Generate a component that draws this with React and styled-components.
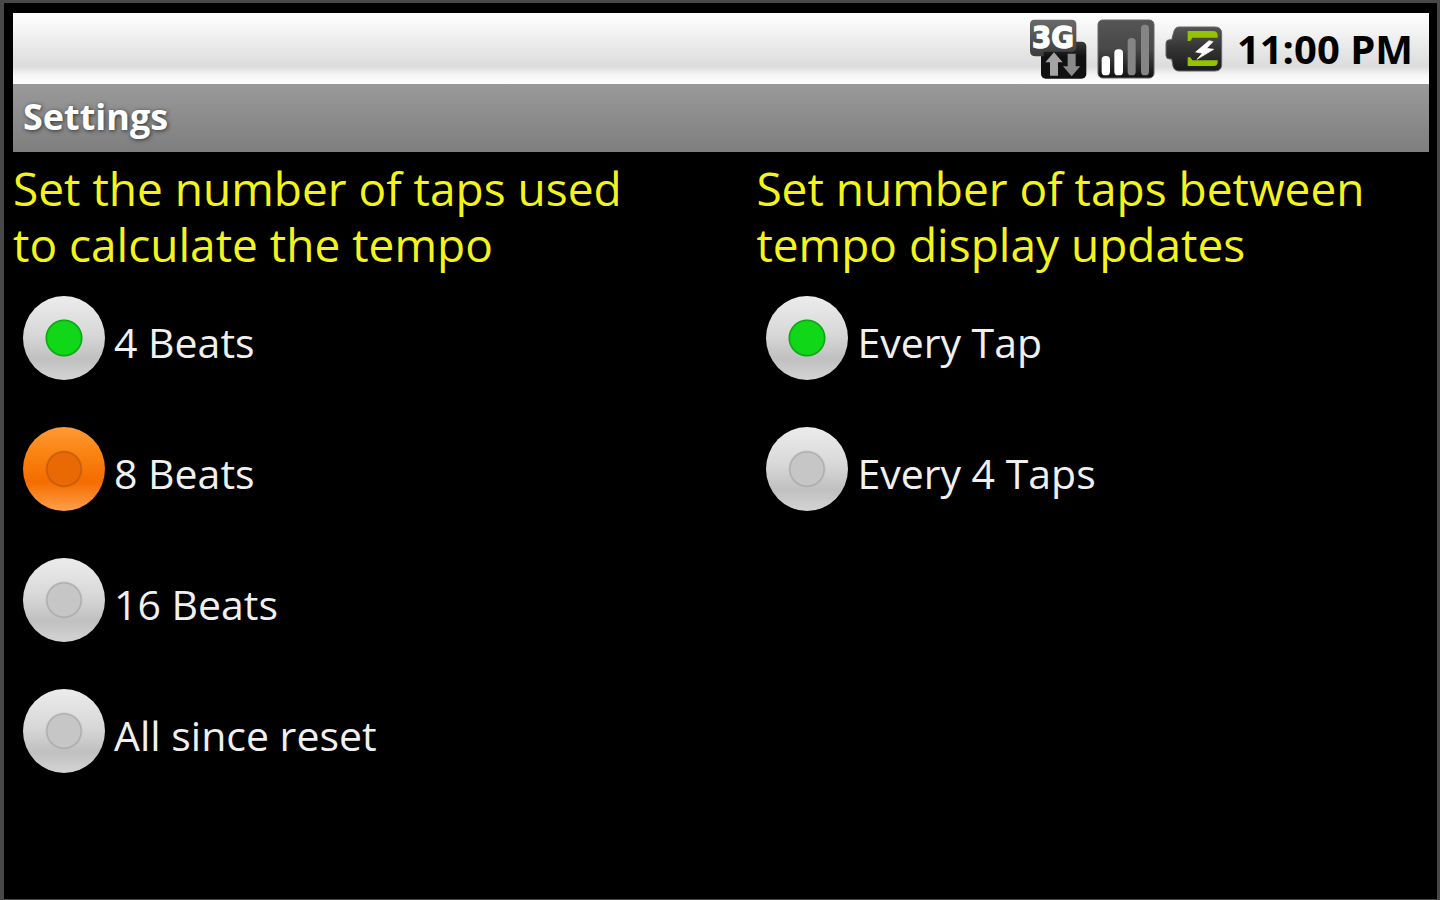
import React, { useState } from "react";
import styled, { createGlobalStyle, css } from "styled-components";

const BEAT_OPTIONS = ["4 Beats", "8 Beats", "16 Beats", "All since reset"];
const UPDATE_OPTIONS = ["Every Tap", "Every 4 Taps"];

const NetworkIcon = () => (
  <svg width="58" height="60" viewBox="54 50 174 180" aria-hidden="true">
    <defs>
      <linearGradient id="net" x1="0" y1="0" x2="0" y2="1">
        <stop offset="0" stopColor="#6a6a6a" />
        <stop offset="1" stopColor="#3c3c3c" />
      </linearGradient>
      <linearGradient id="arrows" x1="0" y1="0" x2="0" y2="1">
        <stop offset="0" stopColor="#3a3a3a" />
        <stop offset="0.4" stopColor="#111" />
        <stop offset="1" stopColor="#111" />
      </linearGradient>
    </defs>
    <rect x="90" y="118" width="136" height="111" rx="14" fill="url(#arrows)" />
    <path
      d="M70 52h112q14 0 14 14v68q0 14-14 14h-84v14H74q-17 0-17-16V66q0-14 13-14z"
      fill="url(#net)"
    />
    <text
      x="126"
      y="137"
      textAnchor="middle"
      fontFamily="DejaVu Sans Condensed, DejaVu Sans, sans-serif"
      fontSize="92"
      fontWeight="bold"
      fill="#fff"
      stroke="#fff"
      strokeWidth="4"
    >
      3G
    </text>
    <path d="M129 150l26 30h-14v40h-24v-40h-14z" fill="#a4a4a4" />
    <path d="M182 222l-26-30h14v-38h24v38h14z" fill="#8a8a8a" />
  </svg>
);

const SignalIcon = () => (
  <svg width="58" height="60" viewBox="256 51 174 180" aria-hidden="true">
    <defs>
      <linearGradient id="signal" x1="0" y1="0" x2="0" y2="1">
        <stop offset="0" stopColor="#555" />
        <stop offset="0.5" stopColor="#484848" />
        <stop offset="1" stopColor="#101010" />
      </linearGradient>
    </defs>
    <rect x="259" y="54" width="168" height="174" rx="14" fill="url(#signal)" stroke="#666" strokeWidth="3" />
    <rect x="270" y="162" width="25" height="58" rx="11" fill="#fff" />
    <rect x="308" y="142" width="26" height="78" rx="11" fill="#fff" />
    <rect x="348" y="108" width="24" height="112" rx="11" fill="#858585" />
    <rect x="388" y="68" width="24" height="152" rx="11" fill="#858585" />
  </svg>
);

const BatteryIcon = () => (
  <svg width="58" height="46" viewBox="460 74 174 138" aria-hidden="true">
    <defs>
      <linearGradient id="battery" x1="0" y1="0" x2="0" y2="1">
        <stop offset="0" stopColor="#555" />
        <stop offset="0.5" stopColor="#333" />
        <stop offset="1" stopColor="#1a1a1a" />
      </linearGradient>
    </defs>
    <path
      d="M502 77h108q20 0 20 20v92q0 20-20 20H502q-14 0-18-14l-4-22h-6q-11 0-11-11v-36q0-11 11-11h6l6-22q4-16 16-16z"
      fill="url(#battery)"
      stroke="#666"
      strokeWidth="3"
    />
    <path d="M528 89h76q14 0 14 14v6h-76l-6 10h-8z" fill="#94c400" />
    <path d="M528 168h8l6 9h76v4q0 13-12 13h-78z" fill="#94c400" />
    <path d="M592 118l-40 34 20 4-16 18 50-30-21-3 19-20z" fill="#fff" stroke="#fff" strokeWidth="2" />
  </svg>
);

const OptionGroup = ({ name, title, options, pressed }) => {
  const [selected, setSelected] = useState(options[0]);

  return (
    <Group>
      <GroupTitle>{title}</GroupTitle>
      {options.map((option) => (
        <Option key={option}>
          <Radio
            type="radio"
            name={name}
            value={option}
            checked={selected === option}
            onChange={() => setSelected(option)}
            $pressed={pressed === option}
          />
          <OptionText>{option}</OptionText>
        </Option>
      ))}
    </Group>
  );
};

const App = () => {
  return (
    <Frame>
      <GlobalStyle />
      <StatusBar>
        <NetworkIcon />
        <SignalIcon />
        <BatteryIcon />
        <Clock>11:00 PM</Clock>
      </StatusBar>
      <TitleBar>Settings</TitleBar>
      <Content>
        <OptionGroup
          name="beats"
          title="Set the number of taps used to calculate the tempo"
          options={BEAT_OPTIONS}
          pressed="8 Beats"
        />
        <OptionGroup
          name="updates"
          title="Set number of taps between tempo display updates"
          options={UPDATE_OPTIONS}
        />
      </Content>
    </Frame>
  );
};

const GlobalStyle = createGlobalStyle`
  body {
    margin: 0;
    background: #000;
    font-family: "Open Sans", "Noto Sans", sans-serif;
  }
`;

const Frame = styled.div`
  min-height: 100vh;
  box-sizing: border-box;
  padding: 10px 8px 0 9px;
  border: solid #484848;
  border-width: 3px 3px 1px 4px;
  background: #000;
`;

const StatusBar = styled.header`
  display: flex;
  align-items: center;
  justify-content: flex-end;
  gap: 10px;
  height: 71px;
  padding: 0 16px 0 0;
  box-sizing: border-box;
  background: linear-gradient(#fff 0%, #f4f4f4 25%, #dcdcdc 75%, #f6f6f6 88%, #fff 100%);
`;

const Clock = styled.time`
  margin-left: 4px;
  font-size: 40px;
  line-height: 56px;
  font-weight: 700;
  color: #000;
`;

const TitleBar = styled.h1`
  margin: 0;
  padding: 0 10px 2px;
  font-size: 36px;
  line-height: 66px;
  font-weight: 700;
  color: #fff;
  text-shadow: 1px 1px 4px #333;
  background: linear-gradient(#9a9a9a, #7e7e7e);
`;

const Content = styled.main`
  display: grid;
  grid-template-columns: 21fr 19fr;
  padding-top: 8px;
`;

const Group = styled.section`
  display: flex;
  flex-direction: column;
`;

const GroupTitle = styled.h2`
  max-width: 640px;
  margin: 0 0 24px;
  font-size: 46px;
  line-height: 56px;
  font-weight: 400;
  color: #f4f41c;
`;

const Option = styled.label`
  display: flex;
  align-items: flex-start;
  gap: 9px;
  height: 131px;
  padding-left: 10px;
`;

const pressedFace = css`
  background:
    radial-gradient(circle at center, #e96a04 0 16px, #c25a08 17px, transparent 19px),
    linear-gradient(#ff9a38, #fb8412 30%, #f46c00 65%, #ffa04a);
`;

const Radio = styled.input`
  appearance: none;
  flex: none;
  width: 82px;
  height: 84px;
  margin: 0;
  border-radius: 50%;
  background:
    radial-gradient(circle at center, #c6c6c6 0 16px, #aaa 17px, transparent 19px),
    linear-gradient(#ececec, #d8d8d8 45%, #c0c0c0 75%, #d4d4d4);

  &:checked {
    background:
      radial-gradient(circle at center, #10d818 0 16px, #0aa012 18px, transparent 19px),
      linear-gradient(#ececec, #d8d8d8 45%, #c0c0c0 75%, #d4d4d4);
  }

  ${(props) => props.$pressed && pressedFace}
`;

const OptionText = styled.span`
  padding-top: 18px;
  font-size: 41px;
  line-height: 56px;
  color: #f0f0f0;
`;

export default App;
